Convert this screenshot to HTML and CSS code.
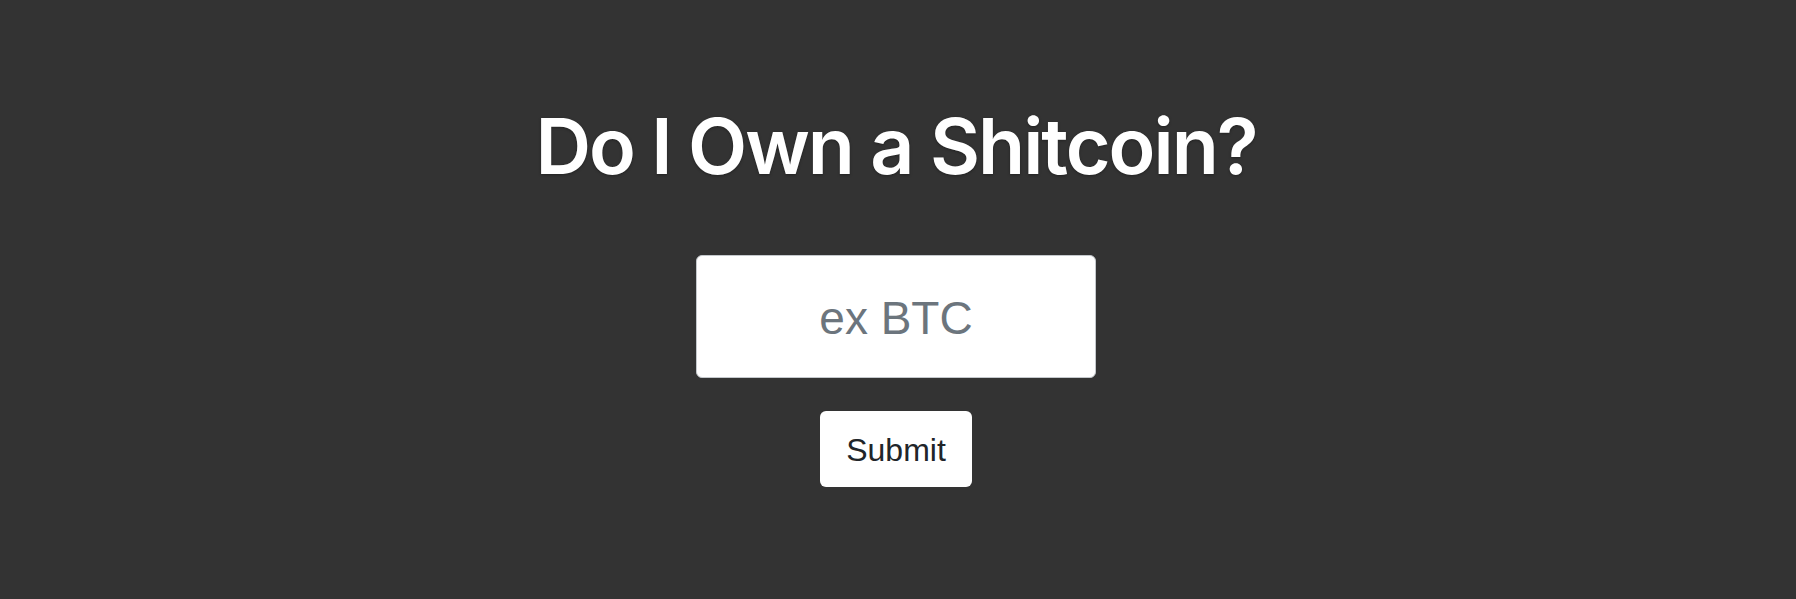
FILE: index.html
```html
<!DOCTYPE html>
<html lang="en">
<head>
<meta charset="utf-8">
<title>Do I Own a Shitcoin?</title>
<link rel="stylesheet" href="styles.css">
</head>
<body>
<main class="page">
  <h1 class="title">Do I Own a Shitcoin?</h1>
  <form class="form" onsubmit="return false;">
    <input class="coin-input" type="text" placeholder="ex BTC">
    <button class="submit-btn" type="submit">Submit</button>
  </form>
</main>
</body>
</html>
```

FILE: styles.css
```css
html, body {
  margin: 0;
  padding: 0;
  background: #333333;
  height: 100%;
}
.page {
  display: flex;
  flex-direction: column;
  align-items: center;
  padding-top: 99px;
  padding-right: 4px;
  font-family: "Liberation Sans", Arial, sans-serif;
}
.title {
  margin: 0;
  font-family: Inter, "Liberation Sans", Arial, sans-serif;
  font-size: 77px;
  line-height: 94px;
  font-weight: 600;
  letter-spacing: -2px;
  color: #ffffff;
  text-shadow: 0 1px 3px rgba(0,0,0,0.35);
}
.form {
  display: flex;
  flex-direction: column;
  align-items: center;
  margin-top: 62px;
  gap: 33px;
}
.coin-input {
  box-sizing: border-box;
  width: 400px;
  height: 123px;
  padding: 34px 12px 31px;
  border: 1px solid #c4c8cc;
  border-radius: 6px;
  background: #ffffff;
  font-family: "Liberation Sans", Arial, sans-serif;
  font-size: 46px;
  line-height: 56px;
  color: #495057;
  text-align: center;
  outline: none;
}
.coin-input::placeholder {
  color: #6c757d;
  opacity: 1;
}
.submit-btn {
  box-sizing: border-box;
  width: 152px;
  height: 76px;
  padding: 15px 0 13px;
  border: 0;
  border-radius: 6px;
  background: #ffffff;
  font-family: "Liberation Sans", Arial, sans-serif;
  font-size: 32px;
  line-height: 48px;
  color: #212529;
  cursor: pointer;
}
```
